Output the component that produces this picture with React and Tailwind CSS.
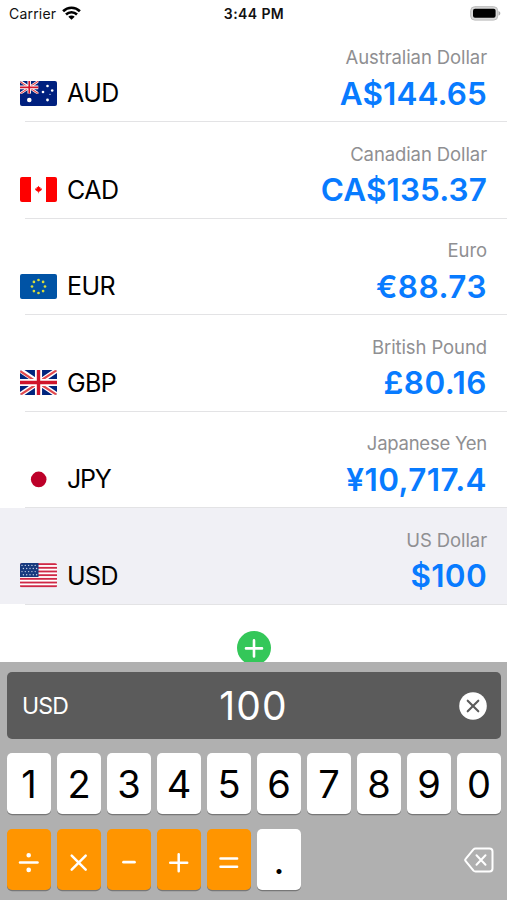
const currencies = [
  { code: 'AUD', name: 'Australian Dollar', amount: 'A$144.65', Flag: FlagAU, codeTracking: 'tracking-[-0.5px]', nameTracking: 'tracking-[-0.1px]', amountTracking: 'tracking-[0.1px]' },
  { code: 'CAD', name: 'Canadian Dollar', amount: 'CA$135.37', Flag: FlagCA, codeTracking: 'tracking-[-0.5px]', nameTracking: 'tracking-[-0.1px]', amountTracking: 'tracking-[0.1px]' },
  { code: 'EUR', name: 'Euro', amount: '€88.73', Flag: FlagEU, codeTracking: 'tracking-[-0.6px]', nameTracking: 'tracking-[-0.1px]', amountTracking: 'tracking-[0.5px]' },
  { code: 'GBP', name: 'British Pound', amount: '£80.16', Flag: FlagGB, codeTracking: 'tracking-[-0.6px]', nameTracking: 'tracking-[-0.1px]', amountTracking: 'tracking-[0.5px]' },
  { code: 'JPY', name: 'Japanese Yen', amount: '¥10,717.4', Flag: FlagJP, codeTracking: 'tracking-[-1.2px]', nameTracking: 'tracking-[-0.25px]', amountTracking: 'tracking-[0.4px]' },
  { code: 'USD', name: 'US Dollar', amount: '$100', Flag: FlagUS, codeTracking: 'tracking-[-0.6px]', nameTracking: 'tracking-[-0.1px]', amountTracking: 'tracking-[0.3px]', selected: true },
]

const digits = ['1', '2', '3', '4', '5', '6', '7', '8', '9', '0']

const operators = [
  { label: 'divide', icon: <><path d="M13 33.5h17.5" /><path d="M21.7 26.2v.1M21.7 40.8v.1" strokeWidth="4.6" /></> },
  { label: 'multiply', icon: <path d="M14.7 26.7l14 14M28.7 26.7l-14 14" /> },
  { label: 'subtract', icon: <path d="M16.5 33.2h11" strokeWidth="2.7" /> },
  { label: 'add', icon: <path d="M13.2 33.7h17M21.7 25.2v17" /> },
  { label: 'equals', icon: <path d="M13.5 29.500h16.600M13.500 37.800h16.600" /> },
]

function UnionJack({ width, height }) {
  return (
    <svg width={width} height={height} viewBox="0 0 60 40" preserveAspectRatio="none">
      <path fill="#00247d" d="M0 0h60v40H0z" />
      <path stroke="#fff" strokeWidth="8" d="M0 0l60 40M60 0L0 40" />
      <path stroke="#e0484d" strokeWidth="3.4" d="M0 1.5l28 18.5M32 18l28-18M0 40l28-18M32 22l28 18" />
      <path stroke="#fff" strokeWidth="11.5" d="M30 0v40M0 20h60" />
      <path stroke="#cf142b" strokeWidth="5.5" d="M30 0v40M0 20h60" />
    </svg>
  )
}

function FlagAU() {
  return (
    <svg className="size-full" viewBox="0 0 37 25">
      <path fill="#00207f" d="M0 0h37v25H0z" />
      <UnionJack width="18.5" height="12.8" />
      <g fill="#fff">
        <circle cx="9.3" cy="19" r="2.3" />
        <circle cx="27.5" cy="5" r="1.3" />
        <circle cx="23" cy="11" r="1.3" />
        <circle cx="32.2" cy="9.5" r="1.3" />
        <circle cx="27.5" cy="19" r="1.4" />
        <circle cx="30" cy="13.3" r=".6" />
      </g>
    </svg>
  )
}

function FlagCA() {
  return (
    <svg className="size-full" viewBox="0 0 37 25">
      <path fill="#fff" d="M0 0h37v25H0z" />
      <path fill="#fe0000" d="M0 0h11v25H0zM26 0h11v25H26z" />
      <path fill="#fe0000" d="M18.5 8.8l.9 1.500 1-.2-.2 1.300 1.800.2-.4 1.300-1.900 1.700-.9.100v1.500h-.6v-1.500l-.9-.1-1.900-1.700-.4-1.300 1.800-.2-.2-1.300 1 .2z" />
    </svg>
  )
}

function FlagEU() {
  const stars = Array.from({ length: 8 }, (_, i) => (i * Math.PI) / 4)
  return (
    <svg className="size-full" viewBox="0 0 37 25">
      <path fill="#0053a5" d="M0 0h37v25H0z" />
      {stars.map((a) => (
        <circle key={a} fill="#d8dc3c" cx={18.5 + 6.5 * Math.sin(a)} cy={12.5 - 6.5 * Math.cos(a)} r="1.35" />
      ))}
    </svg>
  )
}

function FlagGB() {
  return <UnionJack width="100%" height="100%" />
}

function FlagJP() {
  return (
    <svg className="size-full" viewBox="0 0 37 25">
      <path fill="#fff" d="M0 0h37v25H0z" />
      <circle cx="18.7" cy="12.4" r="7.8" fill="#bd0029" />
    </svg>
  )
}

function FlagUS() {
  const stripes = [0, 1, 2, 3, 4, 5, 6]
  const stars = Array.from({ length: 20 }, (_, i) => i)
  return (
    <svg className="size-full" viewBox="0 0 37 25">
      <path fill="#fff" d="M0 0h37v24H0z" />
      {stripes.map((i) => (
        <rect key={i} fill="#cf2846" y={0.2 + i * 3.68} width="37" height="1.84" />
      ))}
      <path fill="#173a7e" d="M0 0h18.5v14H0z" />
      {stars.map((i) => (
        <circle key={i} fill="#c5cfe2" cx={2 + (i % 5) * 3.3 + (Math.floor(i / 5) % 2) * 1.4} cy={2.4 + Math.floor(i / 5) * 3.1} r=".7" />
      ))}
    </svg>
  )
}

function StatusBar() {
  return (
    <header className="grid h-[25px] shrink-0 grid-cols-3 items-center pr-1.5 pl-[9px] text-[14px] leading-none text-[#111]">
      <div className="flex items-center gap-[6px] pt-[3px]">
        <span className="tracking-[0.2px]">Carrier</span>
        <svg className="mb-[3px]" width="19" height="14" viewBox="0 0 19 14" fill="none" stroke="#000" strokeWidth="2.6">
          <path d="M1.1 5.200a12 12 0 0 1 16.800 0" />
          <path d="M4 8.500a7.900 7.900 0 0 1 11 0" />
          <path fill="#000" stroke="none" d="M9.500 13.800L6.300 10.800a4.600 4.600 0 0 1 6.400 0z" />
        </svg>
      </div>
      <div className="pt-[3px] pr-[2px] text-center font-semibold tracking-[0.4px]">3:44 PM</div>
      <svg className="mt-px justify-self-end" width="31" height="15" viewBox="0 0 31 15">
        <rect x=".7" y=".7" width="27" height="13.400" rx="4" fill="#d8d8d8" stroke="#bbb" />
        <rect x="3" y="2.800" width="22.600" height="9" rx="2" />
        <path fill="#aaa" d="M28.500 5c2.400.8 2.400 3.800 0 4.600z" />
      </svg>
    </header>
  )
}

function CurrencyRow({ currency }) {
  const { code, name, amount, Flag, codeTracking, nameTracking, amountTracking, selected } = currency
  return (
    <li className={selected ? 'h-[96.5px] bg-[#f0f0f5]' : 'h-[96.5px]'}>
      <div className="flex h-full flex-col pt-[20px] pr-5 pl-5">
        <div className={`self-end text-[18.5px] leading-6 text-[#8f8f92] ${nameTracking}`}>{name}</div>
        <div className="mt-px flex h-[46px] items-center">
          <div className="h-[25px] w-[37px] overflow-hidden rounded-[2px]">
            <Flag />
          </div>
          <span className={`ml-[10px] pt-px text-[25px] leading-none text-black ${codeTracking}`}>{code}</span>
          <span className={`ml-auto pt-px text-[31.5px] leading-none font-semibold text-[#087bff] ${amountTracking}`}>{amount}</span>
        </div>
        <div className="-mr-5 ml-[5px] h-px shrink-0 translate-y-[5px] bg-[#e3e3e5]" />
      </div>
    </li>
  )
}

function Key({ className, children, ...props }) {
  return (
    <button className={`flex h-[61px] w-[44px] items-center justify-center rounded-[5px] shadow-[0_1.3px_0_#777] ${className}`} {...props}>
      {children}
    </button>
  )
}

function Keypad() {
  return (
    <section className="h-[238px] shrink-0 bg-[#b0b0b0] pt-[10px] pr-[6px] pl-[7px]">
      <div className="grid h-[67px] grid-cols-3 items-center rounded-[5px] bg-[#5b5b5b] pr-[14px] pl-[15px] text-white">
        <span className="pt-px text-[23px] leading-none tracking-[-0.8px]">USD</span>
        <span className="pr-[2px] text-center text-[39px] leading-none tracking-[1.2px]">100</span>
        <svg className="justify-self-end" width="28" height="28" viewBox="0 0 28 28">
          <circle cx="14" cy="14" r="13.800" fill="#fff" />
          <path d="M8.700 8.700l10.600 10.600M19.300 8.700L8.700 19.300" stroke="#5b5b5b" strokeWidth="2.100" strokeLinecap="round" />
        </svg>
      </div>
      <div className="mt-[14px] flex gap-[6px]">
        {digits.map((d) => (
          <Key key={d} className="bg-white text-[38px] leading-none text-black">{d}</Key>
        ))}
      </div>
      <div className="mt-[15px] flex gap-[6px]">
        {operators.map(({ label, icon }) => (
          <Key key={label} aria-label={label} className="bg-[#ff9500]">
            <svg width="44" height="61" viewBox="0 0 44 61" fill="none" stroke="#fff" strokeWidth="2.500" strokeLinecap="round">
              {icon}
            </svg>
          </Key>
        ))}
        <Key className="bg-white text-[38px] leading-none text-black">.</Key>
        <button className="mr-[7px] ml-auto" aria-label="Delete">
          <svg width="30" height="26" viewBox="0 0 30 26" fill="none" stroke="#fff" strokeWidth="2" strokeLinecap="round" strokeLinejoin="round">
            <path d="M11.500 1.500H25.500a3 3 0 0 1 3 3v17a3 3 0 0 1-3 3H11.500a3 3 0 0 1-2-.9L1.900 14.400a2 2 0 0 1 0-2.800L9.500 2.400a3 3 0 0 1 2-.9z" />
            <path d="M12.500 8.300l9 9.400M21.500 8.300l-9 9.400" />
          </svg>
        </button>
      </div>
    </section>
  )
}

export default function App() {
  return (
    <div className="flex h-[900px] w-[507px] flex-col overflow-hidden bg-white font-[Inter,sans-serif]">
      <StatusBar />
      <main className="min-h-0 flex-1 overflow-hidden">
        <ul>
          {currencies.map((c) => (
            <CurrencyRow key={c.code} currency={c} />
          ))}
        </ul>
        <svg className="mx-auto mt-[27px]" width="34" height="34" viewBox="0 0 34 34">
          <circle cx="17" cy="17" r="17" fill="#34c759" />
          <path d="M9 17.400h16M17 9.400v16" stroke="#fff" strokeWidth="2.600" strokeLinecap="round" />
        </svg>
      </main>
      <Keypad />
    </div>
  )
}
